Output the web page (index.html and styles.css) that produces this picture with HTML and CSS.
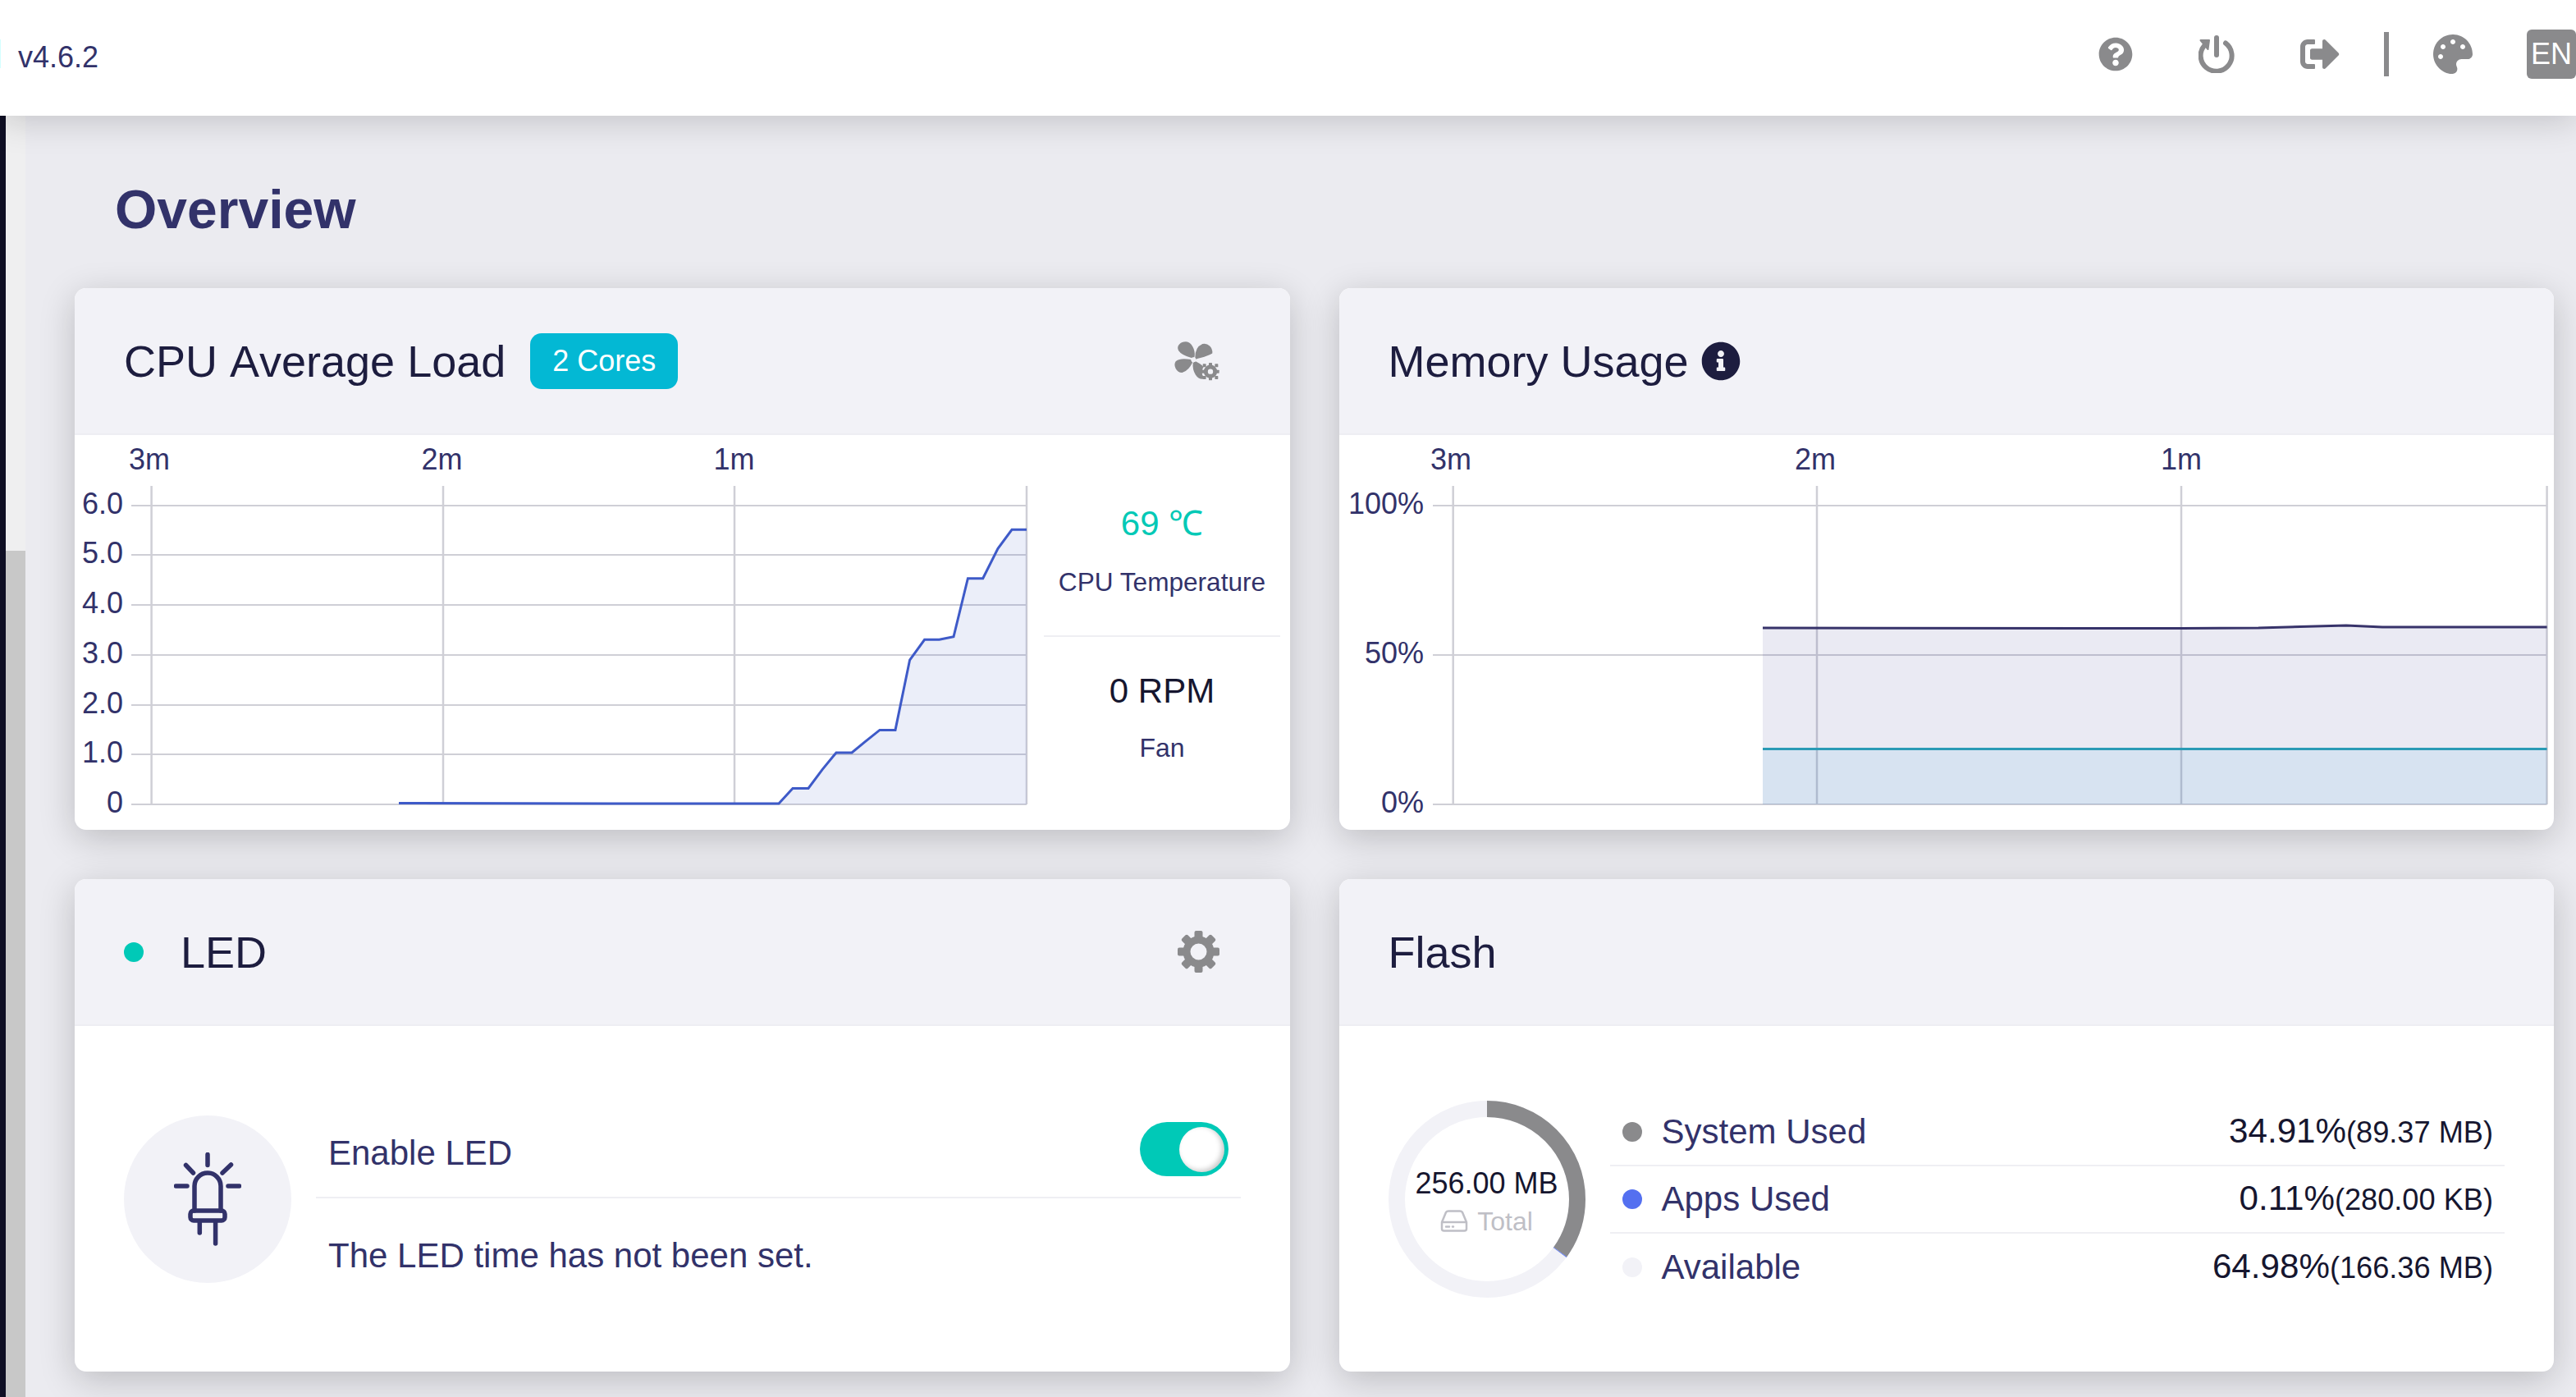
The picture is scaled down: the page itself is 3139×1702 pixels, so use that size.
FILE: index.html
```html
<!DOCTYPE html>
<html lang="en">
<head>
<meta charset="utf-8">
<title>Overview</title>
<link rel="stylesheet" href="styles.css">
</head>
<body>
<header class="topbar">
  <span class="version">v4.6.2</span>
  <div class="tools">
    <svg class="tool tool-help" viewBox="0 0 512 512"><path d="M504 256c0 136.997-111.043 248-248 248S8 392.997 8 256C8 119.083 119.043 8 256 8s248 111.083 248 248zM262.655 90c-54.497 0-89.255 22.957-116.549 63.758-3.536 5.286-2.353 12.415 2.715 16.258l34.699 26.31c5.205 3.947 12.621 3.008 16.665-2.122 17.864-22.658 30.113-35.797 57.303-35.797 20.429 0 45.698 13.148 45.698 32.958 0 14.976-12.363 22.667-32.534 33.976C247.128 238.528 216 254.941 216 296v4c0 6.627 5.373 12 12 12h56c6.627 0 12-5.373 12-12v-1.333c0-28.462 83.186-29.647 83.186-106.667 0-58.002-60.165-102-116.531-102zM256 338c-25.365 0-46 20.635-46 46 0 25.364 20.635 46 46 46s46-20.636 46-46c0-25.365-20.635-46-46-46z"/></svg>
    <svg class="tool tool-power" viewBox="0 0 44 46"><path class="power-line" d="M33 9.500A19 19 0 1 1 7.500 12"/><path class="power-line" d="M22 3V24"/><path class="power-head" d="M2.500 6H13L11.500 17Z"/></svg>
    <svg class="tool tool-exit" viewBox="0 0 512 512"><path d="M497 273L329 441c-15 15-41 4.500-41-17v-96H152c-13.300 0-24-10.700-24-24v-96c0-13.300 10.700-24 24-24h136V88c0-21.400 25.900-32 41-17l168 168c9.300 9.400 9.300 24.600 0 34zM192 436v-40c0-6.600-5.400-12-12-12H96c-17.700 0-32-14.300-32-32V160c0-17.700 14.300-32 32-32h84c6.600 0 12-5.400 12-12V76c0-6.600-5.400-12-12-12H96c-53 0-96 43-96 96v192c0 53 43 96 96 96h84c6.600 0 12-5.400 12-12z"/></svg>
    <span class="tool-sep"></span>
    <svg class="tool tool-palette" viewBox="0 0 512 512"><path d="M204.300 5C104.900 24.400 24.800 104.300 5.200 203.400c-37 187 131.700 326.400 258.800 306.700 41.200-6.400 61.400-54.600 42.500-91.700-23.100-45.400 9.900-98.400 60.900-98.400h79.700c35.800 0 64.800-29.600 64.900-65.300C511.500 97.100 368.100-26.900 204.300 5zM96 320c-17.700 0-32-14.300-32-32s14.300-32 32-32 32 14.300 32 32-14.300 32-32 32zm32-128c-17.700 0-32-14.300-32-32s14.300-32 32-32 32 14.300 32 32-14.300 32-32 32zm128-64c-17.700 0-32-14.300-32-32s14.300-32 32-32 32 14.300 32 32-14.300 32-32 32zm128 64c-17.700 0-32-14.300-32-32s14.300-32 32-32 32 14.300 32 32-14.300 32-32 32z"/></svg>
    <span class="lang">EN</span>
  </div>
</header>

<div class="shell">
  <div class="rail"></div>
  <div class="strip"><div class="strip-top"></div><div class="strip-bottom"></div></div>
  <main class="main">
    <h1 class="page-title">Overview</h1>
    <div class="grid">

      <section class="card">
        <div class="card-head">
          <h2 class="card-title card-title-cpu">CPU Average Load</h2>
          <span class="badge">2 Cores</span>
          <svg class="icon-fan" viewBox="0 0 210 180">
            <path class="fan-wing" d="M85 76C70 72 46 66 36 50C28 36 42 22 60 22C80 24 92 50 89 72Z"/>
            <path class="fan-wing" d="M97 76C97 58 104 38 122 30C140 26 155 42 154 60C138 70 116 74 97 80Z"/>
            <path class="fan-wing" d="M78 87C62 84 38 82 26 92C16 106 28 128 46 129C62 126 76 106 81 95Z"/>
            <path class="fan-wing" d="M96 94C108 100 124 110 124 118C114 128 116 142 124 152C104 156 86 128 89 97Z"/>
            <circle class="fan-hub" cx="88" cy="85" r="9"/>
            <circle class="fan-halo" cx="150" cy="128" r="30"/>
            <g class="gear-small">
              <circle class="gear-ring" cx="150" cy="128" r="17"/>
              <rect class="gear-tooth" x="144" y="96" width="12" height="12" rx="2"/>
              <rect class="gear-tooth" x="144" y="148" width="12" height="12" rx="2"/>
              <rect class="gear-tooth" x="118" y="122" width="12" height="12" rx="2"/>
              <rect class="gear-tooth" x="170" y="122" width="12" height="12" rx="2"/>
              <rect class="gear-tooth" x="122" y="100" width="12" height="12" rx="2"/>
              <rect class="gear-tooth" x="166" y="100" width="12" height="12" rx="2"/>
              <rect class="gear-tooth" x="122" y="144" width="12" height="12" rx="2"/>
              <rect class="gear-tooth" x="166" y="144" width="12" height="12" rx="2"/>
            </g>
          </svg>
        </div>
        <div class="cpu-body">
          <svg class="chart-cpu" viewBox="0 0 1180 481">
            <g class="grid-lines">
              <path class="grid-v" d="M93.600 62V450M449 62V450M804 62V450M1160 62V450"/>
              <path d="M69 86H1160M69 146H1160M69 207H1160M69 268H1160M69 329H1160M69 389H1160M69 450H1160"/>
            </g>
            <path class="cpu-area" d="M395 450V448.500L650 449L858 449L875 430.500H894L911 407.600L928 387H947L963.500 373.300L981 359.400H1000L1017.600 274L1035.600 249.300H1053.500L1071 245.800L1088.400 174.700H1106.700L1125 138.300L1142 115.300H1160V450Z"/>
            <path class="cpu-line" d="M395 448.500L650 449L858 449L875 430.500H894L911 407.600L928 387H947L963.500 373.300L981 359.400H1000L1017.600 274L1035.600 249.300H1053.500L1071 245.800L1088.400 174.700H1106.700L1125 138.300L1142 115.300H1160"/>
            <text class="axis" x="91" y="42" text-anchor="middle">3m</text>
            <text class="axis" x="447.600" y="42" text-anchor="middle">2m</text>
            <text class="axis" x="803.600" y="42" text-anchor="middle">1m</text>
            <text class="axis" x="59" y="96" text-anchor="end">6.0</text>
            <text class="axis" x="59" y="156" text-anchor="end">5.0</text>
            <text class="axis" x="59" y="217" text-anchor="end">4.0</text>
            <text class="axis" x="59" y="278" text-anchor="end">3.0</text>
            <text class="axis" x="59" y="339" text-anchor="end">2.0</text>
            <text class="axis" x="59" y="399" text-anchor="end">1.0</text>
            <text class="axis" x="59" y="460" text-anchor="end">0</text>
          </svg>
          <div class="stats">
            <div class="stat stat-first">
              <div class="stat-temp">69 ℃</div>
              <div class="stat-label stat-label-temp">CPU Temperature</div>
            </div>
            <div class="stat">
              <div class="stat-rpm">0 RPM</div>
              <div class="stat-label stat-label-fan">Fan</div>
            </div>
          </div>
        </div>
      </section>

      <section class="card">
        <div class="card-head">
          <h2 class="card-title">Memory Usage</h2>
          <svg class="icon-info" viewBox="0 0 512 512"><path d="M256 8C119.043 8 8 119.083 8 256c0 136.997 111.043 248 248 248s248-111.003 248-248C504 119.083 392.957 8 256 8zm0 110c23.196 0 42 18.804 42 42s-18.804 42-42 42-42-18.804-42-42 18.804-42 42-42zm56 254c0 6.627-5.373 12-12 12h-88c-6.627 0-12-5.373-12-12v-24c0-6.627 5.373-12 12-12h12v-64h-12c-6.627 0-12-5.373-12-12v-24c0-6.627 5.373-12 12-12h64c6.627 0 12 5.373 12 12v100h12c6.627 0 12 5.373 12 12v24z"/></svg>
        </div>
        <svg class="chart-mem" viewBox="0 0 1480 481">
          <g class="grid-lines">
            <path class="grid-v" d="M138.700 62V450M582 62V450M1026 62V450M1471.600 62V450"/>
            <path d="M114 86H1471.600M114 268H1471.600M114 450H1471.600"/>
          </g>
          <path class="mem-area-used" d="M516 450V235L1026 235.500L1120 235L1227 232L1271 234L1471.600 234V450Z"/>
          <path class="mem-area-apps" d="M516 450V382.400H1471.600V450Z"/>
          <path class="mem-line-used" d="M516 235L1026 235.500L1120 235L1227 232L1271 234L1471.600 234"/>
          <path class="mem-line-apps" d="M516 382.400H1471.600"/>
          <text class="axis" x="136" y="42" text-anchor="middle">3m</text>
          <text class="axis" x="580" y="42" text-anchor="middle">2m</text>
          <text class="axis" x="1026" y="42" text-anchor="middle">1m</text>
          <text class="axis" x="103" y="96" text-anchor="end">100%</text>
          <text class="axis" x="103" y="278" text-anchor="end">50%</text>
          <text class="axis" x="103" y="460" text-anchor="end">0%</text>
        </svg>
      </section>

      <section class="card">
        <div class="card-head">
          <span class="led-dot"></span>
          <h2 class="card-title">LED</h2>
          <svg class="icon-gear" viewBox="0 0 51 51">
            <circle class="gear-ring-big" cx="25.500" cy="25.500" r="14.500"/>
            <g class="gear-teeth">
              <rect x="20.500" y="0" width="10" height="10" rx="2"/>
              <rect x="20.500" y="41" width="10" height="10" rx="2"/>
              <rect x="0" y="20.500" width="10" height="10" rx="2"/>
              <rect x="41" y="20.500" width="10" height="10" rx="2"/>
              <rect x="20.500" y="0" width="10" height="10" rx="2" transform="rotate(45 25.500 25.500)"/>
              <rect x="20.500" y="41" width="10" height="10" rx="2" transform="rotate(45 25.500 25.500)"/>
              <rect x="0" y="20.500" width="10" height="10" rx="2" transform="rotate(45 25.500 25.500)"/>
              <rect x="41" y="20.500" width="10" height="10" rx="2" transform="rotate(45 25.500 25.500)"/>
            </g>
          </svg>
        </div>
        <div class="led-body">
          <div class="led-circle">
            <svg class="icon-led" viewBox="0 0 82 114">
              <path d="M41 2.500V15.500M14.500 15.500L23.500 25M69.500 15L59 25M2.500 41H16M66 41H79.500"/>
              <path d="M25 71V41A16 16 0 0 1 57 41V71"/>
              <rect x="20" y="71" width="42" height="12" rx="4"/>
              <path d="M31.300 85V98M50.600 85V111"/>
            </svg>
          </div>
          <div class="led-rows">
            <div class="led-row-top">
              <span class="led-enable">Enable LED</span>
              <span class="switch"><span class="switch-knob"></span></span>
            </div>
            <p class="led-note">The LED time has not been set.</p>
          </div>
        </div>
      </section>

      <section class="card">
        <div class="card-head">
          <h2 class="card-title">Flash</h2>
        </div>
        <div class="flash-body">
          <div class="ring">
            <svg class="ring-svg" viewBox="0 0 240 240">
              <circle class="ring-track" cx="120" cy="120" r="110"/>
              <g transform="rotate(-90 120 120)">
                <circle class="ring-system" cx="120" cy="120" r="110"/>
                <circle class="ring-apps" cx="120" cy="120" r="110"/>
              </g>
            </svg>
            <div class="ring-text">
              <div class="ring-value">256.00 MB</div>
              <div class="ring-total">
                <svg class="icon-disk" viewBox="0 0 34 27"><path d="M2 15L7 3Q8 1.500 10 1.500H24Q26 1.500 27 3L32 15V23Q32 25.500 29.500 25.500H4.500Q2 25.500 2 23ZM2 15H32M7 20.500H11M15 20.500H16"/></svg>
                <span>Total</span>
              </div>
            </div>
          </div>
          <ul class="legend">
            <li class="legend-row"><span class="legend-dot dot-system"></span><span class="legend-name">System Used</span><span class="legend-value">34.91%<small class="legend-size">(89.37 MB)</small></span></li>
            <li class="legend-row"><span class="legend-dot dot-apps"></span><span class="legend-name">Apps Used</span><span class="legend-value">0.11%<small class="legend-size">(280.00 KB)</small></span></li>
            <li class="legend-row legend-row-last"><span class="legend-dot dot-free"></span><span class="legend-name">Available</span><span class="legend-value">64.98%<small class="legend-size">(166.36 MB)</small></span></li>
          </ul>
        </div>
      </section>

    </div>
  </main>
</div>
</body>
</html>
```
FILE: styles.css
```css
* { box-sizing: border-box; }
html, body { margin: 0; padding: 0; }
body {
  width: 3139px;
  height: 1702px;
  overflow: hidden;
  background: #ebebf0;
  color: #32326a;
  font-family: "Liberation Sans", Arial, sans-serif;
}

/* top bar */
.topbar {
  position: relative;
  z-index: 2;
  display: flex;
  align-items: center;
  height: 141px;
  padding: 0 0 9px 22px;
  background: #fff;
  box-shadow: 0 5px 40px rgba(0, 0, 0, .18);
}
.topbar::before {
  content: "";
  position: absolute;
  left: 0;
  top: 48px;
  width: 1px;
  height: 35px;
  background: #d4ffff;
}
.version {
  padding-top: 7px;
  font-size: 36px;
  line-height: 48px;
  color: #32326a;
}
.tools {
  display: flex;
  align-items: center;
  margin-left: auto;
}
.tool { display: block; fill: #8a8a8c; }
.tool-help { width: 42px; height: 42px; }
.tool-power { width: 44px; height: 46px; margin-left: 80px; fill: none; }
.power-line { fill: none; stroke: #8a8a8c; stroke-width: 6; stroke-linecap: round; }
.power-head { fill: #8a8a8c; stroke: #8a8a8c; stroke-width: 2; stroke-linejoin: round; }
.tool-exit { width: 48px; height: 48px; margin-left: 80px; }
.tool-sep { width: 6px; height: 54px; margin-left: 54px; background: #8a8a8c; }
.tool-palette { width: 48px; height: 48px; margin-left: 54px; }
.lang {
  width: 60px;
  height: 60px;
  margin-left: 66px;
  border-radius: 6px;
  background: #8a8a8c;
  color: #fff;
  font-size: 36px;
  line-height: 60px;
  text-align: center;
}

/* page frame */
.shell { display: flex; height: 1561px; }
.rail { width: 7px; background: #0f0f24; }
.strip { display: flex; flex-direction: column; width: 24px; }
.strip-top { height: 530px; background: #efeff0; }
.strip-bottom { flex: 1; background: #c8c8c8; }
.main { flex: 1; min-width: 0; padding: 74px 27px 0 60px; }
.page-title {
  margin: 0 0 56px;
  padding-left: 49px;
  font-size: 66px;
  line-height: 80px;
  font-weight: 700;
  color: #32326a;
}
.grid {
  display: grid;
  grid-template-columns: 1fr 1fr;
  grid-template-rows: 660px 600px;
  gap: 60px;
}

/* cards */
.card {
  overflow: hidden;
  border-radius: 14px;
  background: #fff;
  box-shadow: 0 10px 44px rgba(0, 0, 0, .2);
}
.card-head {
  display: flex;
  align-items: center;
  height: 179px;
  padding-left: 60px;
  border-bottom: 2px solid #eeeef3;
  background: #f2f2f7;
}
.card-title {
  margin: 0;
  font-size: 54px;
  line-height: 64px;
  font-weight: 400;
  color: #1d1d3f;
}
.card-title-cpu { font-kerning: none; }
.badge {
  margin-left: 30px;
  padding: 0 27px;
  height: 68px;
  border-radius: 14px;
  background: #03b8d4;
  color: #fff;
  font-size: 36px;
  line-height: 68px;
}
.icon-fan { width: 70px; height: 60px; margin-left: auto; margin-right: 77px; }
.fan-wing { fill: #8a8a8c; stroke: #8a8a8c; stroke-width: 6; stroke-linejoin: round; }
.fan-hub { fill: #f2f2f7; }
.fan-halo { fill: #f2f2f7; }
.gear-tooth { fill: #8a8a8c; }
.gear-ring { fill: none; stroke: #8a8a8c; stroke-width: 15; }
.icon-info { width: 48px; height: 48px; margin-left: 15px; fill: #1d1d3f; }
.icon-gear { width: 51px; height: 51px; margin-left: auto; margin-right: 86px; }
.gear-ring-big { fill: none; stroke: #8a8a8c; stroke-width: 9; }
.gear-teeth { fill: #8a8a8c; }

/* charts */
.cpu-body { display: flex; }
.chart-cpu { display: block; flex: none; width: 1180px; height: 481px; }
.chart-mem { display: block; width: 1480px; height: 481px; }
.grid-lines path { fill: none; stroke: #cfcfd6; stroke-width: 2; }
.grid-lines .grid-v { stroke-width: 2.500; }
.axis { font-size: 36px; fill: #32326a; }
.cpu-area { fill: rgba(62, 90, 200, .1); }
.cpu-line { fill: none; stroke: #3e5ac8; stroke-width: 3; }
.mem-area-used { fill: rgba(50, 50, 140, .1); }
.mem-area-apps { fill: rgba(30, 170, 220, .09); }
.mem-line-used { fill: none; stroke: #37336a; stroke-width: 3; }
.mem-line-apps { fill: none; stroke: #2a9bb5; stroke-width: 3; }

/* cpu stats */
.stats { flex: none; width: 288px; margin-left: 1px; text-align: center; }
.stat-first { padding: 84px 0 45px; border-bottom: 2px solid #efeff3; }
.stat-temp { font-size: 42px; line-height: 48px; color: #02c9b6; }
.stat-label { font-size: 32px; line-height: 40px; color: #32326a; }
.stat-label-temp { margin-top: 27px; font-size: 31.600px; }
.stat-rpm { margin-top: 42px; font-size: 42px; line-height: 48px; color: #16162f; }
.stat-label-fan { margin-top: 25px; }

/* led */
.led-dot { width: 24px; height: 24px; margin-right: 45px; border-radius: 50%; background: #00c9b7; }
.led-body { display: flex; align-items: flex-start; padding: 109px 60px 0; }
.led-circle {
  display: flex;
  align-items: center;
  justify-content: center;
  flex: none;
  width: 204px;
  height: 204px;
  border-radius: 50%;
  background: #f2f2f7;
}
.icon-led { width: 82px; height: 114px; fill: none; stroke: #32326a; stroke-width: 5.500; stroke-linecap: round; }
.led-rows { flex: 1; margin-left: 30px; }
.led-row-top {
  display: flex;
  justify-content: space-between;
  align-items: flex-start;
  height: 101px;
  padding: 0 15px;
  border-bottom: 2px solid #efeff3;
}
.led-enable { margin-top: 22px; font-size: 42px; line-height: 48px; }
.switch {
  display: flex;
  align-items: center;
  justify-content: flex-end;
  width: 108px;
  height: 66px;
  margin-top: 8px;
  padding-right: 5px;
  border-radius: 33px;
  background: #00c9b7;
}
.switch-knob {
  width: 55px;
  height: 55px;
  border-radius: 50%;
  background: #fff;
  box-shadow: inset -3px -2px 6px rgba(0, 0, 0, .22);
}
.led-note { margin: 0; padding: 46px 0 0 15px; font-size: 42px; line-height: 48px; }

/* flash */
.flash-body { display: flex; align-items: flex-start; padding: 89px 60px 0; }
.ring { display: grid; flex: none; width: 240px; height: 240px; margin-top: 2px; }
.ring-svg, .ring-text { grid-area: 1 / 1; }
.ring-svg { display: block; width: 240px; height: 240px; }
.ring-track, .ring-system, .ring-apps { fill: none; stroke-width: 20; }
.ring-track { stroke: #f2f2f7; }
.ring-system { stroke: #8a8a8c; stroke-dasharray: 241.3 691.2; }
.ring-apps { stroke: #5470f0; stroke-dasharray: .8 691.2; stroke-dashoffset: -241.3; }
.ring-text { display: flex; flex-direction: column; align-items: center; justify-content: center; padding-top: 5px; }
.ring-value { font-size: 36px; line-height: 44px; color: #16162f; }
.ring-total {
  display: flex;
  align-items: center;
  gap: 11px;
  margin-top: 4px;
  font-size: 32px;
  line-height: 40px;
  color: #bfbfc6;
}
.icon-disk { width: 34px; height: 27px; fill: none; stroke: #bfbfc6; stroke-width: 2.500; stroke-linejoin: round; stroke-linecap: round; }
.legend { flex: 1; margin: 0 0 0 30px; padding: 0; list-style: none; }
.legend-row {
  display: flex;
  align-items: center;
  height: 82px;
  padding: 0 14px 0 15px;
  border-bottom: 2px solid #efeff3;
  font-size: 42px;
  line-height: 48px;
}
.legend-row-last { border-bottom: 0; }
.legend-dot { flex: none; width: 24px; height: 24px; margin-right: 24px; border-radius: 50%; }
.dot-system { background: #8a8a8c; }
.dot-apps { background: #5470f0; }
.dot-free { background: #f2f2f7; }
.legend-name { color: #32326a; }
.legend-value { margin-left: auto; color: #16162f; font-size: 42.150px; }
.legend-size { font-size: 36.200px; }
```
